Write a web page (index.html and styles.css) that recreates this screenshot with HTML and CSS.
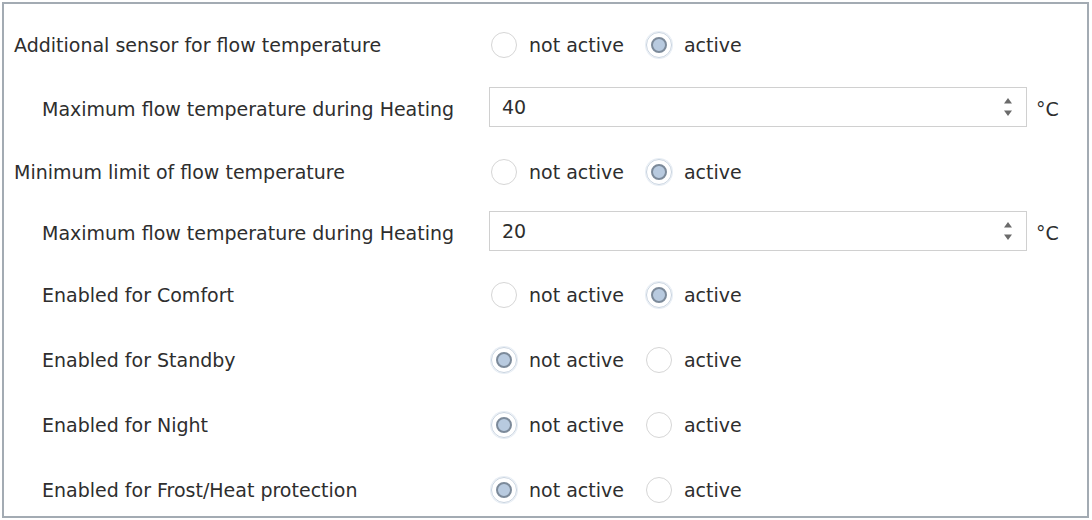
FILE: index.html
```html
<!DOCTYPE html>
<html lang="en">
<head>
    <meta charset="UTF-8">
    <title>Flow temperature</title>
    <link rel="stylesheet" href="styles.css">
</head>
<body>
    <div class="panel">
        <div class="row">
            <span class="label">Additional sensor for flow temperature</span>
            <div class="options">
                <span class="radio"></span><span class="opt">not active</span>
                <span class="radio on"></span><span class="opt">active</span>
            </div>
        </div>
        <div class="row sub">
            <span class="label">Maximum flow temperature during Heating</span>
            <div class="spin">
                <span class="value">40</span>
                <span class="arrows">
                    <svg width="10" height="22" viewBox="0 0 10 22"><path d="M5 2 L9 7.5 H1 Z M5 20 L9 14.5 H1 Z" fill="#6b6b6b"/></svg>
                </span>
            </div>
            <span class="unit">°C</span>
        </div>
        <div class="row tight">
            <span class="label">Minimum limit of flow temperature</span>
            <div class="options">
                <span class="radio"></span><span class="opt">not active</span>
                <span class="radio on"></span><span class="opt">active</span>
            </div>
        </div>
        <div class="row sub tight">
            <span class="label">Maximum flow temperature during Heating</span>
            <div class="spin">
                <span class="value">20</span>
                <span class="arrows">
                    <svg width="10" height="22" viewBox="0 0 10 22"><path d="M5 2 L9 7.5 H1 Z M5 20 L9 14.5 H1 Z" fill="#6b6b6b"/></svg>
                </span>
            </div>
            <span class="unit">°C</span>
        </div>
        <div class="row sub">
            <span class="label">Enabled for Comfort</span>
            <div class="options">
                <span class="radio"></span><span class="opt">not active</span>
                <span class="radio on"></span><span class="opt">active</span>
            </div>
        </div>
        <div class="row sub wide">
            <span class="label">Enabled for Standby</span>
            <div class="options">
                <span class="radio on"></span><span class="opt">not active</span>
                <span class="radio"></span><span class="opt">active</span>
            </div>
        </div>
        <div class="row sub wide">
            <span class="label">Enabled for Night</span>
            <div class="options">
                <span class="radio on"></span><span class="opt">not active</span>
                <span class="radio"></span><span class="opt">active</span>
            </div>
        </div>
        <div class="row sub wide">
            <span class="label">Enabled for Frost/Heat protection</span>
            <div class="options">
                <span class="radio on"></span><span class="opt">not active</span>
                <span class="radio"></span><span class="opt">active</span>
            </div>
        </div>
    </div>
</body>
</html>
```

FILE: styles.css
```css
body {
    margin: 0;
    background: #ffffff;
    font-family: "DejaVu Sans", sans-serif;
    font-size: 19px;
    color: #2e2e2e;
}

.panel {
    margin: 2px 3px 2px 2px;
    height: 516px;
    border: 2px solid #a3abb3;
    padding-top: 9px;
    box-sizing: border-box;
}

.row {
    display: flex;
    align-items: center;
    height: 64px;
    padding-left: 10px;
}

.row.tight {
    height: 61px;
}

.row.wide {
    height: 65px;
}

.row.sub {
    padding-left: 38px;
}

.label {
    width: 447px;
    flex-shrink: 0;
}

.row:not(.sub) .label {
    width: 475px;
}

.options {
    display: flex;
    align-items: center;
}

.radio {
    width: 26px;
    height: 26px;
    border: 1px solid #d6d6d6;
    border-radius: 50%;
    box-sizing: border-box;
    display: flex;
    align-items: center;
    justify-content: center;
    margin-left: 2px;
    margin-right: 12px;
}

.radio.on {
    border-color: #c9d4e0;
    box-shadow: 0 0 0 1px #e8eef5;
}

.radio.on::after {
    content: "";
    width: 16px;
    height: 16px;
    border-radius: 50%;
    background: #b8cadf;
    border: 2px solid #7c8a9a;
    box-sizing: border-box;
}

.opt {
    margin-right: 20px;
}

.spin {
    width: 538px;
    height: 40px;
    margin-top: -4px;
    border: 1px solid #d0d0d0;
    box-sizing: border-box;
    display: flex;
    align-items: center;
    justify-content: space-between;
    padding: 0 13px 0 12px;
}

.arrows {
    display: flex;
}

.unit {
    margin-left: 9px;
}
```
